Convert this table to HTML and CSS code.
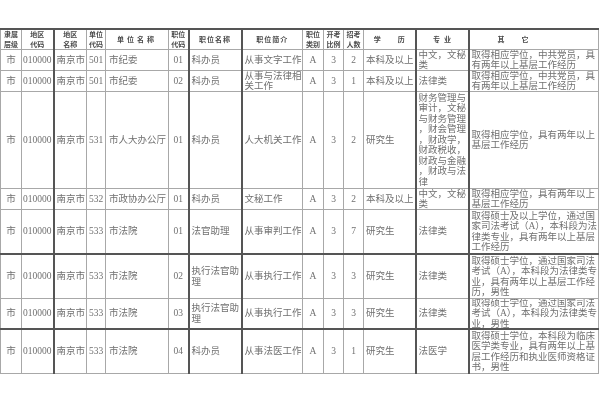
FILE: index.html
```html
<!DOCTYPE html>
<html lang="zh-CN">
<head>
<meta charset="utf-8">
<title>职位表</title>
<link rel="stylesheet" href="styles.css">
</head>
<body>
<table class="jobs">
  <colgroup>
    <col class="w21"><col class="w32"><col class="w33"><col class="w19"><col class="w63"><col class="w20"><col class="w53"><col class="w61"><col class="w21"><col class="w20"><col class="w20"><col class="w52"><col class="w53"><col class="w130">
  </colgroup>
  <thead>
    <tr class="h20">
      <th><div class="c">隶属<br>层级</div></th>
      <th><div class="c">地区<br>代码</div></th>
      <th><div class="c">地区<br>名称</div></th>
      <th><div class="c">单位<br>代码</div></th>
      <th><div class="c wide">单位名称</div></th>
      <th><div class="c">职位<br>代码</div></th>
      <th><div class="c sp">职位名称</div></th>
      <th><div class="c sp">职位简介</div></th>
      <th><div class="c">职位<br>类别</div></th>
      <th><div class="c">开考<br>比例</div></th>
      <th><div class="c">招考<br>人数</div></th>
      <th><div class="c"><span>学</span><span class="gap">历</span></div></th>
      <th><div class="c"><span>专</span><span class="gap2">业</span></div></th>
      <th><div class="c other-h"><span>其</span><span class="gap">它</span></div></th>
    </tr>
  </thead>
  <tbody>
    <tr class="h21">
      <td><div class="c">市</div></td><td><div class="c">010000</div></td><td><div class="c">南京市</div></td><td><div class="c">501</div></td><td><div class="c">市纪委</div></td><td><div class="c">01</div></td><td><div class="c">科办员</div></td><td><div class="c">从事文字工作</div></td><td><div class="c">A</div></td><td><div class="c">3</div></td><td><div class="c">2</div></td><td><div class="c">本科及以上</div></td><td><div class="c">中文，文秘类</div></td><td><div class="c">取得相应学位，中共党员，具有两年以上基层工作经历</div></td>
    </tr>
    <tr class="h21">
      <td><div class="c">市</div></td><td><div class="c">010000</div></td><td><div class="c">南京市</div></td><td><div class="c">501</div></td><td><div class="c">市纪委</div></td><td><div class="c">02</div></td><td><div class="c">科办员</div></td><td><div class="c">从事与法律相关工作</div></td><td><div class="c">A</div></td><td><div class="c">3</div></td><td><div class="c">1</div></td><td><div class="c">本科及以上</div></td><td><div class="c">法律类</div></td><td><div class="c">取得相应学位，中共党员，具有两年以上基层工作经历</div></td>
    </tr>
    <tr class="h97">
      <td><div class="c">市</div></td><td><div class="c">010000</div></td><td><div class="c">南京市</div></td><td><div class="c">531</div></td><td><div class="c">市人大办公厅</div></td><td><div class="c">01</div></td><td><div class="c">科办员</div></td><td><div class="c">人大机关工作</div></td><td><div class="c">A</div></td><td><div class="c">3</div></td><td><div class="c">2</div></td><td><div class="c">研究生</div></td><td><div class="c">财务管理与审计，文秘与财务管理，财会管理，财政学，财政税收，财政与金融，财政与法律</div></td><td><div class="c">取得相应学位，具有两年以上基层工作经历</div></td>
    </tr>
    <tr class="h21">
      <td><div class="c">市</div></td><td><div class="c">010000</div></td><td><div class="c">南京市</div></td><td><div class="c">532</div></td><td><div class="c">市政协办公厅</div></td><td><div class="c">01</div></td><td><div class="c">科办员</div></td><td><div class="c">文秘工作</div></td><td><div class="c">A</div></td><td><div class="c">3</div></td><td><div class="c">2</div></td><td><div class="c">本科及以上</div></td><td><div class="c">中文，文秘类</div></td><td><div class="c">取得相应学位，具有两年以上基层工作经历</div></td>
    </tr>
    <tr class="h44 dk">
      <td><div class="c">市</div></td><td><div class="c">010000</div></td><td><div class="c">南京市</div></td><td><div class="c">533</div></td><td><div class="c">市法院</div></td><td><div class="c">01</div></td><td><div class="c">法官助理</div></td><td><div class="c">从事审判工作</div></td><td><div class="c">A</div></td><td><div class="c">3</div></td><td><div class="c">7</div></td><td><div class="c">研究生</div></td><td><div class="c">法律类</div></td><td><div class="c">取得硕士及以上学位，通过国家司法考试（A），本科段为法律类专业，具有两年以上基层工作经历</div></td>
    </tr>
    <tr class="h44">
      <td><div class="c">市</div></td><td><div class="c">010000</div></td><td><div class="c">南京市</div></td><td><div class="c">533</div></td><td><div class="c">市法院</div></td><td><div class="c">02</div></td><td><div class="c">执行法官助理</div></td><td><div class="c">从事执行工作</div></td><td><div class="c">A</div></td><td><div class="c">3</div></td><td><div class="c">3</div></td><td><div class="c">研究生</div></td><td><div class="c">法律类</div></td><td><div class="c">取得硕士学位，通过国家司法考试（A），本科段为法律类专业，具有两年以上基层工作经历，男性</div></td>
    </tr>
    <tr class="h30 dk">
      <td><div class="c">市</div></td><td><div class="c">010000</div></td><td><div class="c">南京市</div></td><td><div class="c">533</div></td><td><div class="c">市法院</div></td><td><div class="c">03</div></td><td><div class="c">执行法官助理</div></td><td><div class="c">从事执行工作</div></td><td><div class="c">A</div></td><td><div class="c">3</div></td><td><div class="c">3</div></td><td><div class="c">研究生</div></td><td><div class="c">法律类</div></td><td><div class="c">取得硕士学位，通过国家司法考试（A），本科段为法律类专业，男性</div></td>
    </tr>
    <tr class="h44">
      <td><div class="c">市</div></td><td><div class="c">010000</div></td><td><div class="c">南京市</div></td><td><div class="c">533</div></td><td><div class="c">市法院</div></td><td><div class="c">04</div></td><td><div class="c">科办员</div></td><td><div class="c">从事法医工作</div></td><td><div class="c">A</div></td><td><div class="c">3</div></td><td><div class="c">1</div></td><td><div class="c">研究生</div></td><td><div class="c">法医学</div></td><td><div class="c">取得硕士学位，本科段为临床医学类专业，具有两年以上基层工作经历和执业医师资格证书，男性</div></td>
    </tr>
  </tbody>
</table>
</body>
</html>
```

FILE: styles.css
```css
html, body {
  margin: 0;
  padding: 0;
  background: #ffffff;
}

body {
  padding-top: 28px;
  font-family: "Liberation Serif", "Noto Sans CJK SC", serif;
  color: #707070;
}

.jobs {
  border-collapse: collapse;
  table-layout: fixed;
  width: 599px;
  border-top: 2px solid #555555;
  filter: blur(0.45px);
}

.w21 { width: 21px; }
.w32 { width: 32px; }
.w33 { width: 33px; }
.w19 { width: 19px; }
.w63 { width: 63px; }
.w20 { width: 20px; }
.w53 { width: 53px; }
.w61 { width: 61px; }
.w52 { width: 52px; }
.w130 { width: 130px; }

.jobs th,
.jobs td {
  border: 1px solid #a8a8a8;
  padding: 0;
  vertical-align: middle;
}

.jobs th {
  border-top: 2px solid #555555;
}

/* dark vertical rules */
.jobs th:nth-child(2), .jobs td:nth-child(2),
.jobs th:nth-child(6), .jobs td:nth-child(6),
.jobs th:nth-child(7), .jobs td:nth-child(7),
.jobs th:nth-child(12), .jobs td:nth-child(12),
.jobs th:nth-child(13), .jobs td:nth-child(13) {
  border-right: 2px solid #555555;
}

/* dark horizontal rules */
.jobs tr.dk td {
  border-bottom: 2px solid #555555;
}

.c {
  display: flex;
  align-items: center;
  overflow: hidden;
  font-size: 9.5px;
  line-height: 10.5px;
  padding: 0 0 0 2px;
  line-break: anywhere;
  word-break: break-all;
  box-sizing: border-box;
}

.jobs th .c {
  justify-content: center;
  text-align: center;
  font-family: "Noto Sans CJK SC", sans-serif;
  font-weight: bold;
  font-size: 7px;
  line-height: 9.5px;
  color: #4a4a4a;
  padding: 0;
}

.jobs th .wide { letter-spacing: 3px; }
.jobs th .sp { letter-spacing: 1px; }
.jobs th .gap { margin-left: 17px; }
.jobs th .gap2 { margin-left: 4px; }
.jobs th .other-h { justify-content: flex-start; padding-left: 28px; }

/* centred data columns */
.jobs td:nth-child(1) .c,
.jobs td:nth-child(2) .c,
.jobs td:nth-child(4) .c,
.jobs td:nth-child(6) .c,
.jobs td:nth-child(9) .c,
.jobs td:nth-child(10) .c,
.jobs td:nth-child(11) .c {
  justify-content: center;
  padding: 0;
}

.jobs td:nth-child(5) .c { padding-left: 3px; }

.h20 .c { height: 19px; }
.h21 .c { height: 20px; }
.h97 .c { height: 96px; }
.h44 .c { height: 43px; }
.h30 .c { height: 29px; }
```
